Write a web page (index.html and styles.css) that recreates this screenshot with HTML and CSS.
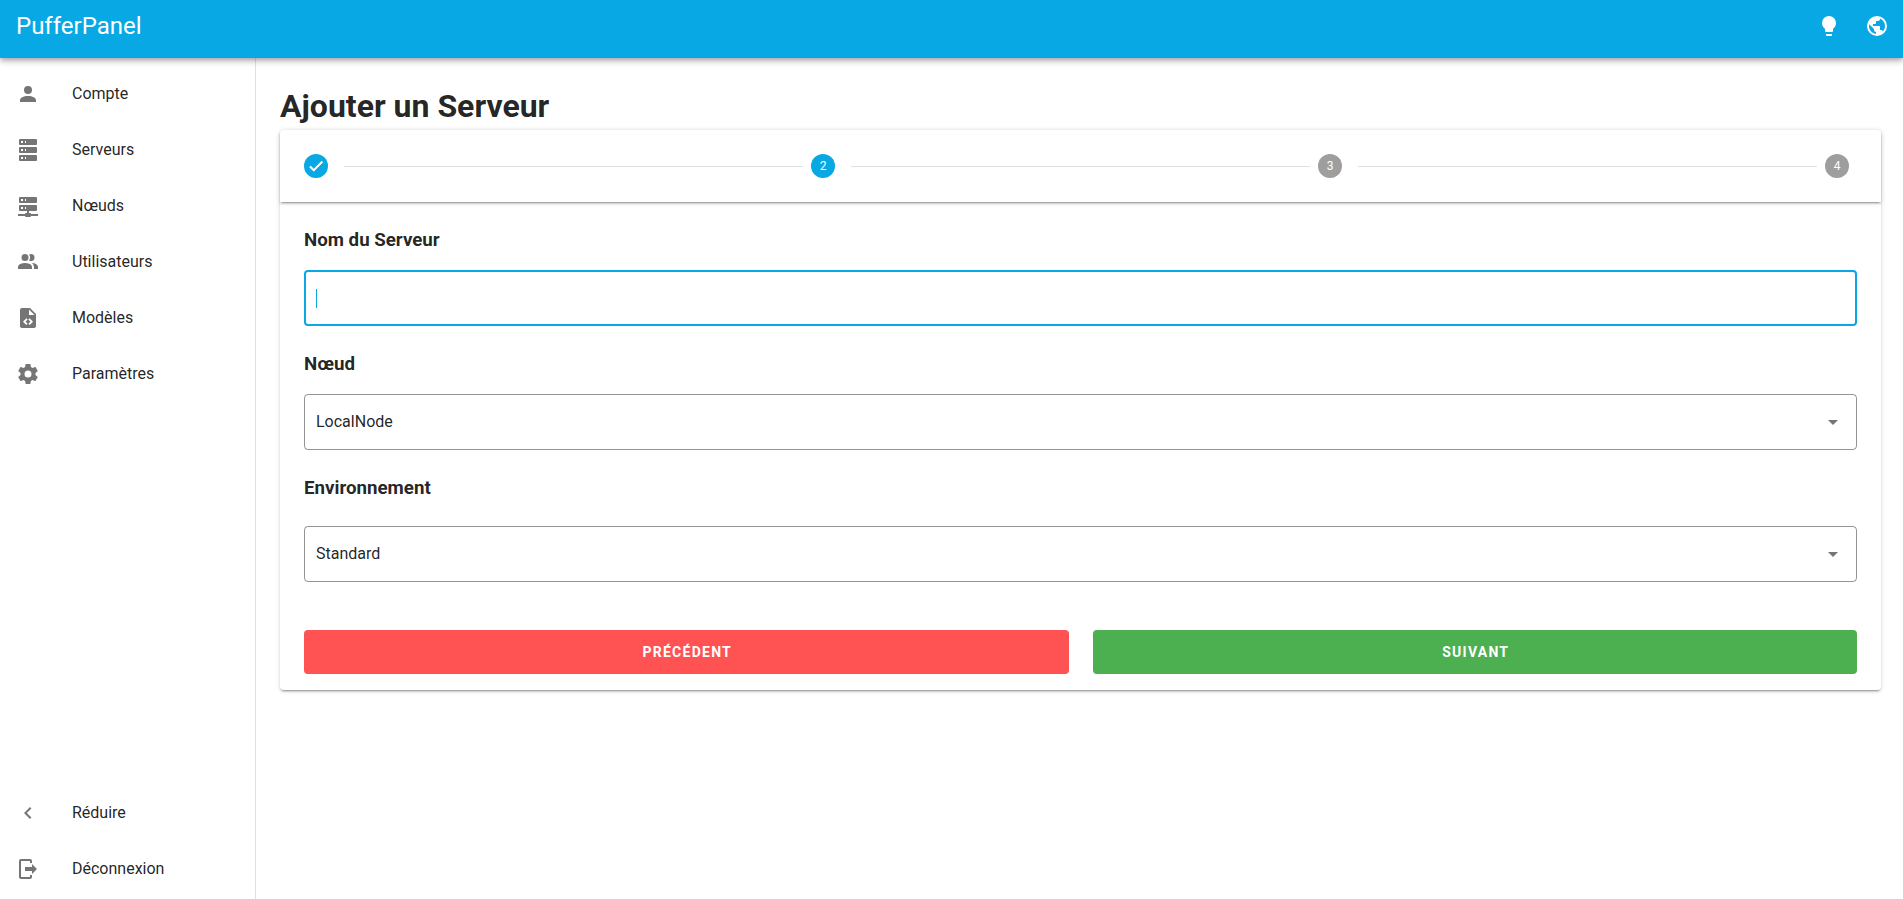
FILE: index.html
```html
<!DOCTYPE html>
<html lang="fr">
<head>
<meta charset="utf-8">
<title>PufferPanel</title>
<link rel="stylesheet" href="styles.css">
</head>
<body>
<header class="topbar">
  <div class="brand">PufferPanel</div>
  <div class="topbar-actions">
    <svg class="icon icon-white" viewBox="0 0 24 24"><path d="M12,2A7,7 0 0,0 5,9C5,11.38 6.19,13.47 8,14.74V17A1,1 0 0,0 9,18H15A1,1 0 0,0 16,17V14.74C17.81,13.47 19,11.38 19,9A7,7 0 0,0 12,2M9,21A1,1 0 0,0 10,22H14A1,1 0 0,0 15,21V20H9V21Z"/></svg>
    <svg class="icon icon-white" viewBox="0 0 24 24"><path d="M17.9,17.39C17.64,16.59 16.89,16 16,16H15V13A1,1 0 0,0 14,12H8V10H10A1,1 0 0,0 11,9V7H13A2,2 0 0,0 15,5V4.59C17.93,5.77 20,8.64 20,12C20,14.08 19.2,15.97 17.9,17.39M11,19.93C7.05,19.44 4,16.08 4,12C4,11.38 4.08,10.78 4.21,10.21L9,15V16A2,2 0 0,0 11,18M12,2A10,10 0 0,0 2,12A10,10 0 0,0 12,22A10,10 0 0,0 22,12A10,10 0 0,0 12,2Z"/></svg>
  </div>
</header>
<div class="shell">
  <nav class="sidebar">
    <ul class="nav-list">
      <li class="nav-item"><svg class="icon" viewBox="0 0 24 24"><path d="M12,4A4,4 0 0,1 16,8A4,4 0 0,1 12,12A4,4 0 0,1 8,8A4,4 0 0,1 12,4M12,14C16.42,14 20,15.79 20,18V20H4V18C4,15.79 7.58,14 12,14Z"/></svg><span>Compte</span></li>
      <li class="nav-item"><svg class="icon" viewBox="0 0 24 24"><path d="M4,1H20A1,1 0 0,1 21,2V6A1,1 0 0,1 20,7H4A1,1 0 0,1 3,6V2A1,1 0 0,1 4,1M4,9H20A1,1 0 0,1 21,10V14A1,1 0 0,1 20,15H4A1,1 0 0,1 3,14V10A1,1 0 0,1 4,9M4,17H20A1,1 0 0,1 21,18V22A1,1 0 0,1 20,23H4A1,1 0 0,1 3,22V18A1,1 0 0,1 4,17M9,5H10V3H9V5M9,13H10V11H9V13M9,21H10V19H9V21M5,3V5H7V3H5M5,11V13H7V11H5M5,19V21H7V19H5Z"/></svg><span>Serveurs</span></li>
      <li class="nav-item"><svg class="icon" viewBox="0 0 24 24"><path d="M13,19H14A1,1 0 0,1 15,20H22V22H15A1,1 0 0,1 14,23H10A1,1 0 0,1 9,22H2V20H9A1,1 0 0,1 10,19H11V17H4A1,1 0 0,1 3,16V12A1,1 0 0,1 4,11H20A1,1 0 0,1 21,12V16A1,1 0 0,1 20,17H13V19M4,3H20A1,1 0 0,1 21,4V8A1,1 0 0,1 20,9H4A1,1 0 0,1 3,8V4A1,1 0 0,1 4,3M9,7H10V5H9V7M9,15H10V13H9V15M5,5V7H7V5H5M5,13V15H7V13H5Z"/></svg><span>Nœuds</span></li>
      <li class="nav-item"><svg class="icon" viewBox="0 0 24 24"><path d="M16 17V19H2V17S2 13 9 13 16 17 16 17M12.5 7.5A3.5 3.5 0 1 0 9 11A3.5 3.5 0 0 0 12.5 7.5M15.94 13A5.32 5.32 0 0 1 18 17V19H22V17S22 13.37 15.94 13M15 4A3.39 3.39 0 0 0 13.07 4.59A5 5 0 0 1 13.07 10.41A3.39 3.39 0 0 0 15 11A3.5 3.5 0 0 0 15 4Z"/></svg><span>Utilisateurs</span></li>
      <li class="nav-item"><svg class="icon" viewBox="0 0 24 24"><path d="M14 2H6C4.89 2 4 2.89 4 4V20C4 21.11 4.89 22 6 22H18C19.11 22 20 21.11 20 20V8L14 2M9.54 15.65L11.63 17.74L10.35 19L7 15.65L10.35 12.3L11.63 13.56L9.54 15.65M17 15.65L13.65 19L12.38 17.74L14.47 15.65L12.38 13.56L13.65 12.3L17 15.65M13 9V3.5L18.5 9H13Z"/></svg><span>Modèles</span></li>
      <li class="nav-item"><svg class="icon" viewBox="0 0 24 24"><path d="M12,15.5A3.5,3.5 0 0,1 8.5,12A3.5,3.5 0 0,1 12,8.5A3.5,3.5 0 0,1 15.5,12A3.5,3.5 0 0,1 12,15.5M19.43,12.97C19.47,12.65 19.5,12.33 19.5,12C19.5,11.67 19.47,11.34 19.43,11L21.54,9.37C21.73,9.22 21.78,8.95 21.66,8.73L19.66,5.27C19.54,5.05 19.27,4.96 19.05,5.05L16.56,6.05C16.04,5.66 15.5,5.32 14.87,5.07L14.5,2.42C14.46,2.18 14.25,2 14,2H10C9.75,2 9.54,2.18 9.5,2.42L9.13,5.07C8.5,5.32 7.96,5.66 7.44,6.05L4.95,5.05C4.73,4.96 4.46,5.05 4.34,5.27L2.34,8.73C2.21,8.95 2.27,9.22 2.46,9.37L4.57,11C4.53,11.34 4.5,11.67 4.5,12C4.5,12.33 4.53,12.65 4.57,12.97L2.46,14.63C2.27,14.78 2.21,15.05 2.34,15.27L4.34,18.73C4.46,18.95 4.73,19.03 4.95,18.95L7.44,17.94C7.96,18.34 8.5,18.68 9.13,18.93L9.5,21.58C9.54,21.82 9.75,22 10,22H14C14.25,22 14.46,21.82 14.5,21.58L14.87,18.93C15.5,18.67 16.04,18.34 16.56,17.94L19.05,18.95C19.27,19.03 19.54,18.95 19.66,18.73L21.66,15.27C21.78,15.05 21.73,14.78 21.54,14.63L19.43,12.97Z"/></svg><span>Paramètres</span></li>
    </ul>
    <ul class="nav-list">
      <li class="nav-item"><svg class="icon" viewBox="0 0 24 24"><path d="M15.41,16.58L10.83,12L15.41,7.41L14,6L8,12L14,18L15.41,16.58Z"/></svg><span>Réduire</span></li>
      <li class="nav-item"><svg class="icon" viewBox="0 0 24 24"><path d="M16,17V14H9V10H16V7L21,12L16,17M14,2A2,2 0 0,1 16,4V6H14V4H5V20H14V18H16V20A2,2 0 0,1 14,22H5A2,2 0 0,1 3,20V4A2,2 0 0,1 5,2H14Z"/></svg><span>Déconnexion</span></li>
    </ul>
  </nav>
  <main class="content">
    <h1 class="page-title">Ajouter un Serveur</h1>
    <section class="card">
      <div class="stepper">
        <span class="step step-active"><svg class="step-check" viewBox="0 0 24 24"><path d="M21,7L9,19L3.5,13.5L4.91,12.09L9,16.17L19.59,5.59L21,7Z"/></svg></span>
        <span class="step-line"></span>
        <span class="step step-active">2</span>
        <span class="step-line"></span>
        <span class="step">3</span>
        <span class="step-line"></span>
        <span class="step">4</span>
      </div>
      <div class="form">
        <h3 class="label">Nom du Serveur</h3>
        <div class="field field-focus"><span class="caret"></span></div>
        <h3 class="label">Nœud</h3>
        <div class="field"><span class="field-value">LocalNode</span><svg class="icon" viewBox="0 0 24 24"><path d="M7,10L12,15L17,10H7Z"/></svg></div>
        <h3 class="label label-tall">Environnement</h3>
        <div class="field"><span class="field-value">Standard</span><svg class="icon" viewBox="0 0 24 24"><path d="M7,10L12,15L17,10H7Z"/></svg></div>
        <div class="actions">
          <button class="btn btn-red">Précédent</button>
          <button class="btn btn-green">Suivant</button>
        </div>
      </div>
    </section>
  </main>
</div>
</body>
</html>
```

FILE: styles.css
```css
* { box-sizing: border-box; }
html, body { height: 100%; }
body {
  margin: 0;
  display: flex;
  flex-direction: column;
  overflow: hidden;
  font-family: Roboto, "Liberation Sans", sans-serif;
  color: rgba(0, 0, 0, 0.87);
  background: #fff;
}
.icon { width: 24px; height: 24px; fill: #757575; flex: none; display: block; }
.icon-white { fill: #fff; }
.topbar {
  height: 58px;
  flex: none;
  position: relative;
  z-index: 2;
  display: flex;
  align-items: center;
  justify-content: space-between;
  padding: 0 14px 6px 16px;
  background: #07a8e4;
  box-shadow: 0 2px 4px -1px rgba(0,0,0,.2), 0 4px 5px 0 rgba(0,0,0,.14), 0 1px 10px 0 rgba(0,0,0,.12);
}
.brand { font-size: 24px; color: #fff; line-height: 32px; margin-bottom: 1px; }
.topbar-actions { display: flex; gap: 24px; }
.shell { flex: 1; display: flex; min-height: 0; }
.sidebar {
  width: 256px;
  flex: none;
  display: flex;
  flex-direction: column;
  justify-content: space-between;
  padding: 7px 0 3px;
  border-right: 1px solid rgba(0,0,0,.12);
}
.nav-list { list-style: none; margin: 0; padding: 0; }
.nav-item {
  height: 56px;
  display: flex;
  align-items: center;
  gap: 32px;
  padding-left: 16px;
  font-size: 16px;
}
.nav-item .icon { margin-top: 2px; }
.content { flex: 1; padding: 24px 22px 0 24px; min-width: 0; }
.page-title { margin: 0; font-size: 32px; font-weight: 700; line-height: 48px; }
.card {
  border-radius: 4px;
  box-shadow: 0 3px 1px -2px rgba(0,0,0,.2), 0 2px 2px 0 rgba(0,0,0,.14), 0 1px 5px 0 rgba(0,0,0,.12);
}
.stepper {
  height: 72px;
  display: flex;
  align-items: center;
  padding: 0 32px 0 24px;
  border-radius: 4px 4px 0 0;
  box-shadow: 0 3px 1px -2px rgba(0,0,0,.2), 0 2px 2px 0 rgba(0,0,0,.14), 0 1px 5px 0 rgba(0,0,0,.12);
}
.step {
  width: 24px;
  height: 24px;
  flex: none;
  display: flex;
  align-items: center;
  justify-content: center;
  border-radius: 50%;
  background: #9e9e9e;
  color: #fff;
  font-size: 12px;
}
.step-active { background: #07a8e4; }
.step-check { width: 18px; height: 18px; fill: #fff; stroke: #fff; stroke-width: 1; }
.step-line { flex: 1; height: 1px; margin: 0 8px 0 16px; background: rgba(0,0,0,.12); }
.form { padding: 25px 24px 16px; }
.label { margin: 0; font-size: 18.72px; font-weight: 700; line-height: 26px; padding-bottom: 17px; }
.field {
  height: 56px;
  display: flex;
  align-items: center;
  justify-content: space-between;
  padding: 0 11px;
  margin-bottom: 25px;
  border: 1px solid rgba(0,0,0,.42);
  border-radius: 4px;
  font-size: 16px;
}
.field-value { margin-bottom: 2px; }
.label-tall { padding-bottom: 25px; }
.field-focus { border: 2px solid #07a8e4; padding: 0 10px; }
.caret { width: 1px; height: 19px; background: #07a8e4; }
.actions { display: grid; grid-template-columns: 1fr 1fr; gap: 24px; margin-top: 48px; }
.btn {
  height: 44px;
  border: 0;
  border-radius: 4px;
  padding: 0 0 0 2px;
  color: #fff;
  font-family: inherit;
  font-size: 14px;
  font-weight: 700;
  letter-spacing: 0.0892857em;
  text-transform: uppercase;
}
.btn-red { background: #ff5252; }
.btn-green { background: #4caf50; }
```
